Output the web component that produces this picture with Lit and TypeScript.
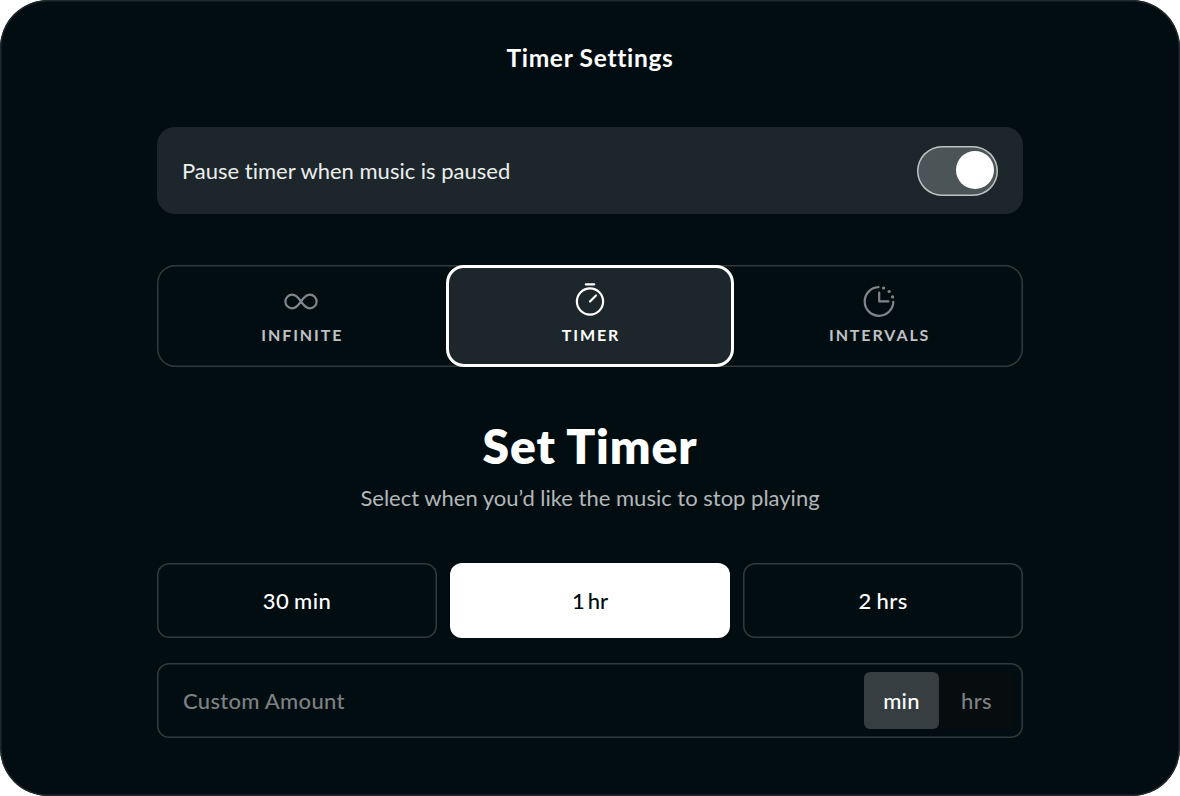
import { html, svg, LitElement, css } from "lit";
import { customElement, property, state } from "lit/decorators.js";
import { classMap } from "lit/directives/class-map.js";

const icons: Record<string, unknown> = {
  infinite: svg`
    <path d="M20 20.500C16.500 15.500 14.500 13.700 11.200 13.700a6.800 6.800 0 0 0 0 13.600C14.500 27.300 16.500 25.500 20 20.500S25.500 13.700 28.800 13.700a6.800 6.800 0 0 1 0 13.600C25.500 27.300 23.500 25.500 20 20.500Z" />
  `,
  timer: svg`
    <circle cx="20" cy="20.500" r="13.100" />
    <path d="M15.800 3.300h8.400M20 20.500l6-6" />
  `,
  intervals: svg`
    <path d="M19.500 6.200A14.300 14.300 0 1 0 34.300 20.900M20.200 11.500v8.900h9.200" />
    <g class="dots">
      <circle cx="24.600" cy="7" r="1.600" />
      <circle cx="30.100" cy="10.500" r="1.600" />
      <circle cx="33.600" cy="15.900" r="1.600" />
    </g>
  `,
};

@customElement("toggle-switch")
class ToggleSwitch extends LitElement {
  @property({ type: Boolean, reflect: true }) checked = false;

  static styles = css`
    :host {
      display: block;
    }

    .track {
      display: flex;
      align-items: center;
      box-sizing: border-box;
      width: 81px;
      height: 50px;
      padding: 0 4.500px 2px;
      border: 0;
      border-radius: 25px;
      box-shadow: inset 0 0 0 1.500px #bcc1c1;
      background: #4b5456;
      cursor: pointer;
    }

    .track.on {
      justify-content: flex-end;
    }

    .knob {
      width: 38px;
      height: 38px;
      border-radius: 50%;
      background: white;
    }
  `;

  #toggle() {
    this.checked = !this.checked;
  }

  render() {
    return html`
      <button
        class=${classMap({ track: true, on: this.checked })}
        role="switch"
        aria-checked=${this.checked}
        @click=${this.#toggle}
      >
        <span class="knob"></span>
      </button>
    `;
  }
}

@customElement("app-root")
class AppRoot extends LitElement {
  @state() mode = "timer";
  @state() preset = "1 hr";
  @state() unit = "min";

  static styles = css`
    :host {
      display: block;
      font-family: Lato, "Liberation Sans", sans-serif;
      font-variant-ligatures: none;
      background: white;
    }

    button {
      font: inherit;
      color: inherit;
      margin: 0;
      padding: 0;
      border: 0;
      background: none;
      cursor: pointer;
    }

    .panel {
      display: flex;
      flex-direction: column;
      box-sizing: border-box;
      width: 1180px;
      height: 796px;
      padding: 1px 157px;
      border-radius: 48px;
      box-shadow: inset 0 0 0 1.500px #1f292d;
      background: #020d12;
      color: white;
    }

    .title {
      margin: 42px 0 54px;
      font-size: 24.500px;
      line-height: 30px;
      font-weight: 700;
      letter-spacing: 0.700px;
      text-align: center;
    }

    .row {
      display: flex;
      align-items: center;
      justify-content: space-between;
      box-sizing: border-box;
      height: 87px;
      padding: 0 25px;
      border-radius: 18px;
      background: #1d272b;
    }

    .row-label {
      font-size: 22px;
      font-weight: 400;
      color: #eceeee;
    }

    .tabs {
      display: grid;
      grid-template-columns: repeat(3, 1fr);
      height: 102px;
      margin-top: 51px;
      border-radius: 18px;
      box-shadow: inset 0 0 0 1.500px #30393c;
    }

    .tab {
      display: flex;
      flex-direction: column;
      align-items: center;
      box-sizing: border-box;
      height: 102px;
      padding-top: 16px;
      color: #808587;
    }

    .tab.active {
      padding-top: 13px;
      border: 3px solid white;
      border-radius: 18px;
      background: #1d272b;
      color: white;
    }

    .tab svg {
      width: 40px;
      height: 40px;
      fill: none;
      stroke: currentColor;
      stroke-width: 2.200;
      stroke-linecap: round;
      stroke-linejoin: round;
    }

    .tab .dots {
      fill: currentColor;
      stroke: none;
    }

    .tab-label {
      margin: 4px -2px 0 0;
      font-size: 16px;
      line-height: 20px;
      font-weight: 700;
      letter-spacing: 1.900px;
      color: #bfc2c3;
    }

    .tab.active .tab-label {
      color: white;
    }

    .heading {
      margin: 50px 0 0;
      font-size: 48px;
      line-height: 58px;
      font-weight: 800;
      letter-spacing: 0.900px;
      text-align: center;
    }

    .hint {
      margin: 9px 0 0;
      font-size: 22px;
      line-height: 28px;
      font-weight: 400;
      text-align: center;
      color: #b3b7b8;
    }

    .presets {
      display: grid;
      grid-template-columns: repeat(3, 1fr);
      gap: 13px;
      margin-top: 51px;
    }

    .preset {
      height: 75px;
      border-radius: 12px;
      box-shadow: inset 0 0 0 1.500px #30393c;
      font-size: 22px;
      font-weight: 500;
      letter-spacing: 0.400px;
      word-spacing: -1px;
    }

    .preset.active {
      background: white;
      box-shadow: none;
      color: #020d12;
      letter-spacing: 0;
      word-spacing: -2.500px;
    }

    .custom {
      display: flex;
      align-items: center;
      box-sizing: border-box;
      height: 75px;
      margin-top: 25px;
      padding: 0 9px 0 26px;
      border-radius: 12px;
      box-shadow: inset 0 0 0 1.500px #30393c;
    }

    .amount {
      flex: 1;
      min-width: 0;
      padding: 0;
      border: 0;
      outline: none;
      background: none;
      font: 500 22px Lato, "Liberation Sans", sans-serif;
      letter-spacing: 0.300px;
      color: white;
    }

    .amount::placeholder {
      color: #7c8182;
    }

    .units {
      display: flex;
      border-radius: 6px;
      background: #070c0f;
    }

    .unit {
      width: 75px;
      height: 57px;
      border-radius: 6px;
      font-size: 22px;
      font-weight: 500;
      letter-spacing: 0.300px;
      color: #7c8182;
    }

    .unit.active {
      background: #363e41;
      color: white;
    }
  `;

  #tab(id: string, label: string) {
    return html`
      <button
        class=${classMap({ tab: true, active: this.mode === id })}
        @click=${() => (this.mode = id)}
      >
        <svg viewBox="0 0 40 40">${icons[id]}</svg>
        <span class="tab-label">${label}</span>
      </button>
    `;
  }

  #preset(label: string) {
    return html`
      <button
        class=${classMap({ preset: true, active: this.preset === label })}
        @click=${() => (this.preset = label)}
      >
        ${label}
      </button>
    `;
  }

  #unit(label: string) {
    return html`
      <button
        class=${classMap({ unit: true, active: this.unit === label })}
        @click=${() => (this.unit = label)}
      >
        ${label}
      </button>
    `;
  }

  render() {
    return html`
      <main class="panel">
        <h1 class="title">Timer Settings</h1>
        <div class="row">
          <span class="row-label">Pause timer when music is paused</span>
          <toggle-switch checked></toggle-switch>
        </div>
        <div class="tabs">
          ${this.#tab("infinite", "INFINITE")} ${this.#tab("timer", "TIMER")}
          ${this.#tab("intervals", "INTERVALS")}
        </div>
        <h2 class="heading">Set Timer</h2>
        <p class="hint">Select when you’d like the music to stop playing</p>
        <div class="presets">
          ${["30 min", "1 hr", "2 hrs"].map((label) => this.#preset(label))}
        </div>
        <div class="custom">
          <input class="amount" placeholder="Custom Amount" />
          <div class="units">${this.#unit("min")} ${this.#unit("hrs")}</div>
        </div>
      </main>
    `;
  }
}
